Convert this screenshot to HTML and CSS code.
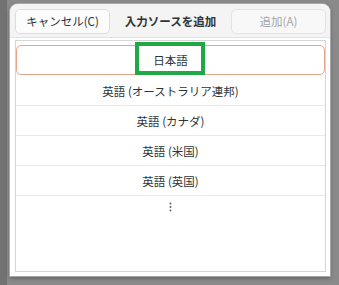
FILE: index.html
```html
<!DOCTYPE html>
<html lang="ja">
<head>
<meta charset="utf-8">
<link rel="stylesheet" href="styles.css">
</head>
<body>
<div class="dialog">
  <div class="header">
    <button class="btn">キャンセル(C)</button>
    <div class="title">入力ソースを追加</div>
    <button class="btn disabled">追加(A)</button>
  </div>
  <div class="list">
    <div class="row selected">日本語</div>
    <div class="row">英語 (オーストラリア連邦)</div>
    <div class="row">英語 (カナダ)</div>
    <div class="row">英語 (米国)</div>
    <div class="row">英語 (英国)</div>
    <div class="row more">
      <svg width="3" height="10" viewBox="0 0 3 10"><circle cx="1.5" cy="1.5" r="0.9" fill="#555"/><circle cx="1.5" cy="5" r="0.9" fill="#555"/><circle cx="1.5" cy="8.5" r="0.9" fill="#555"/></svg>
    </div>
  </div>
  <div class="highlight"></div>
</div>
</body>
</html>
```
FILE: styles.css
```css
html, body {
  margin: 0;
  padding: 0;
}
body {
  width: 339px;
  height: 285px;
  overflow: hidden;
  background: linear-gradient(to right, #727272 0 7px, #8a8a8a 7px);
  font-family: "Noto Sans CJK JP", "Noto Sans", sans-serif;
  font-size: 11px;
  color: #2e3436;
  padding-top: 4px;
  box-sizing: border-box;
}
.dialog {
  position: relative;
  margin-left: 10px;
  width: 320px;
  height: 272px;
  background: #ffffff;
  border-radius: 8px 8px 0 0;
  box-shadow: 0 0 0 1px #a8a8a8, 0 2px 4px rgba(0,0,0,0.35);
  display: flex;
  flex-direction: column;
  overflow: hidden;
}
.header {
  height: 33px;
  background: #f4f4f4;
  border-bottom: 1px solid #e2e2e2;
  display: flex;
  align-items: center;
  justify-content: space-between;
  padding: 0 4px 0 5px;
  flex: none;
}
.btn {
  width: 95px;
  height: 25px;
  border: 1px solid #dcdcdc;
  border-radius: 5px;
  background: #fcfcfc;
  font-family: inherit;
  font-size: 11.5px;
  color: #2e3436;
  padding: 0;
  margin-top: 1px;
}
.btn.disabled {
  color: #a6a6a6;
  background: #f8f8f8;
  border-color: #e2e2e2;
}
.title {
  font-weight: bold;
  font-size: 11.5px;
  color: #2e3436;
}
.list {
  margin: 2px 4px 4px 5px;
  border: 1px solid #d6d6d6;
  flex: 1;
  padding-top: 4px;
  display: flex;
  flex-direction: column;
  font-size: 11.5px;
}
.row {
  height: 29px;
  border-bottom: 1px solid #e9e9e9;
  display: flex;
  align-items: center;
  justify-content: center;
  flex: none;
}
.row.selected {
  height: 28px;
  border: 1px solid #e6a58a;
  border-radius: 5px;
  margin-bottom: 1px;
}
.row.more {
  border-bottom: none;
  height: 22px;
}
.highlight {
  position: absolute;
  left: 125px;
  top: 38px;
  width: 62px;
  height: 25px;
  border: 4px solid #20a846;
}
```
